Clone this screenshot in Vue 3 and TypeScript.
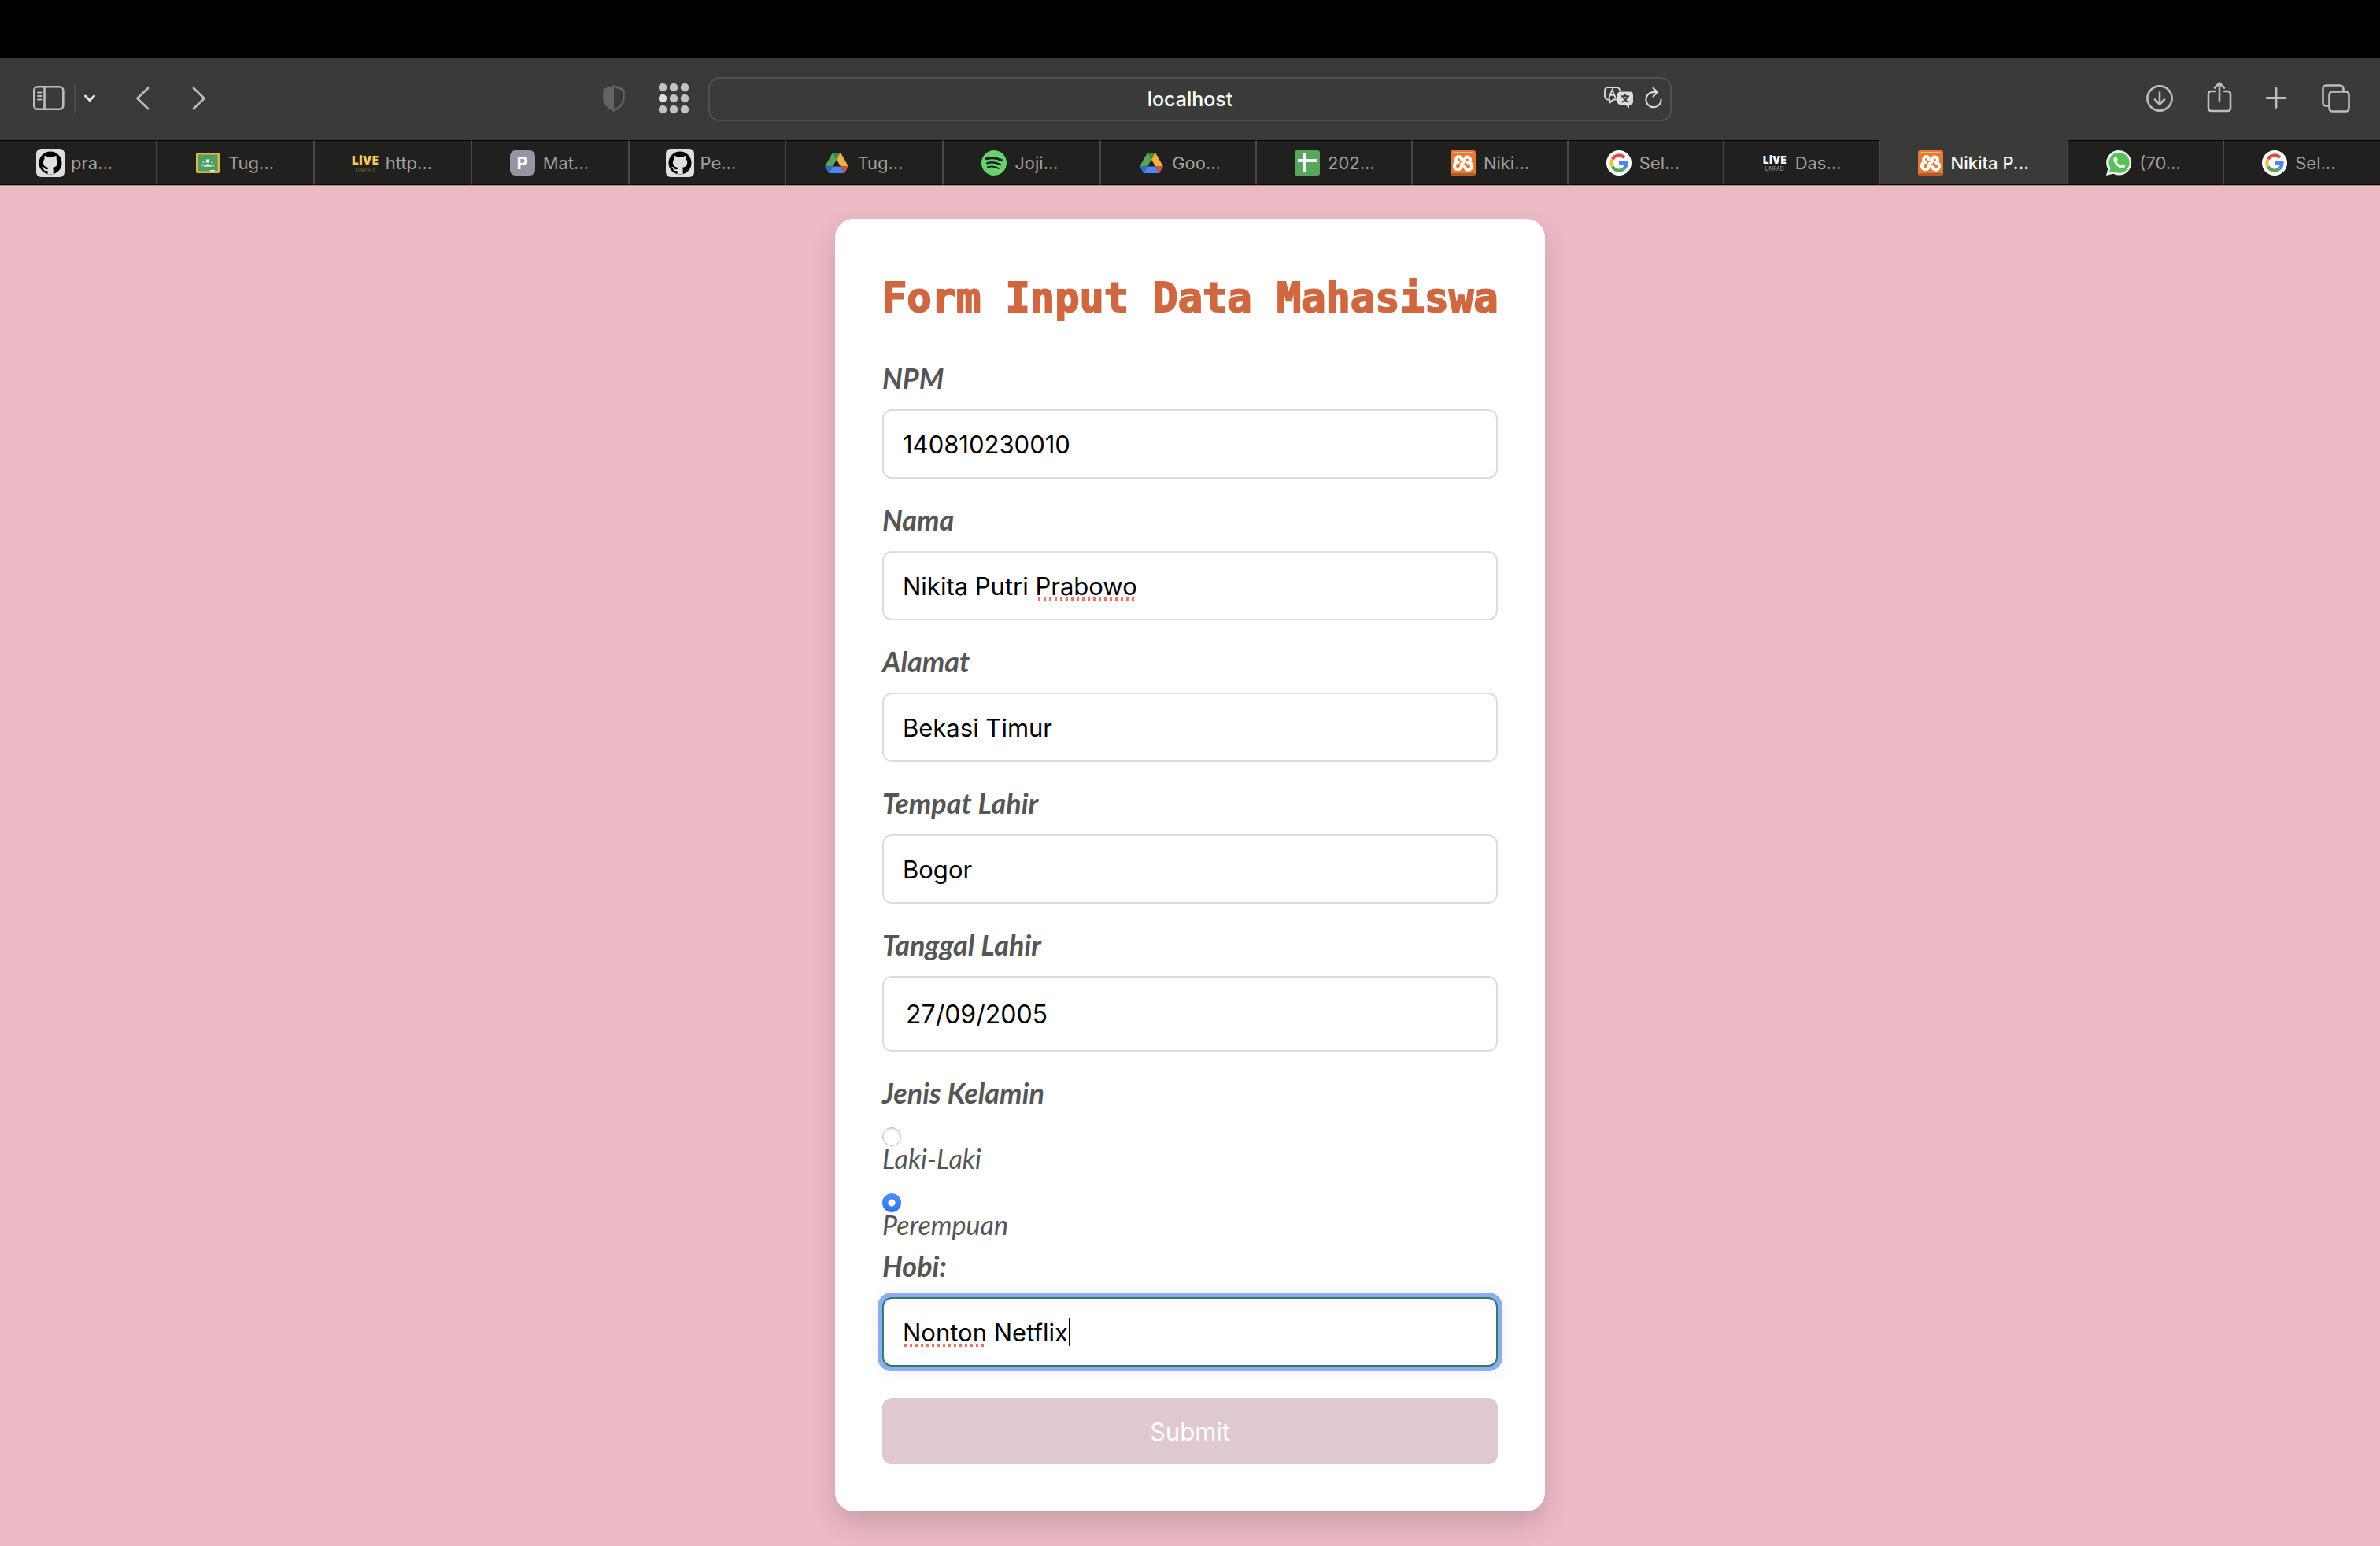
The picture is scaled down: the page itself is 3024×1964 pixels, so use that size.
<script setup lang="ts">
interface Tab { icon: string; title: string; kind?: string }
interface Field { id: string; label: string; value: string; mark?: { left: number; width: number }; kind?: string; caret?: number }

const tabs: Tab[] = [
  { icon: 'github', title: 'pra...', kind: 'wide' },
  { icon: 'classroom', title: 'Tug...', kind: 'wide' },
  { icon: 'live', title: 'http...', kind: 'wide' },
  { icon: 'p', title: 'Mat...', kind: 'wide' },
  { icon: 'github', title: 'Pe...', kind: 'wide' },
  { icon: 'drive', title: 'Tug...', kind: 'wide' },
  { icon: 'spotify', title: 'Joji...', kind: 'wide' },
  { icon: 'drive', title: 'Goo...' },
  { icon: 'sheets', title: '202...' },
  { icon: 'xampp', title: 'Niki...' },
  { icon: 'google', title: 'Sel...' },
  { icon: 'livewhite', title: 'Das...' },
  { icon: 'xampp', title: 'Nikita P...', kind: 'active' },
  { icon: 'whatsapp', title: '(70...' },
  { icon: 'google', title: 'Sel...' },
]

const fields: Field[] = [
  { id: 'npm', label: 'NPM', value: '140810230010' },
  { id: 'nama', label: 'Nama', value: 'Nikita Putri Prabowo', mark: { left: 196, width: 126 } },
  { id: 'alamat', label: 'Alamat', value: 'Bekasi Timur' },
  { id: 'tempat', label: 'Tempat Lahir', value: 'Bogor' },
  { id: 'tanggal', label: 'Tanggal Lahir', value: '27/09/2005', kind: 'date' },
]
const hobby: Field = { id: 'hobi', label: 'Hobi:', value: 'Nonton Netflix', mark: { left: 26, width: 107 }, caret: 237 }
const genders = [
  { id: 'laki', label: 'Laki-Laki', checked: false },
  { id: 'perempuan', label: 'Perempuan', checked: true },
]
</script>

<template>
  <div class="screen">
    <div class="notch"></div>
    <header class="toolbar">
      <div class="side">
        <button class="tool" aria-label="Sidebar">
          <svg width="40" height="32" viewBox="0 0 40 32" fill="none" stroke="#bdbdbb" stroke-width="2.600"><rect x="1.300" y="1.300" width="37" height="28.500" rx="4.500" /><path d="M14.500 2v27" /><path d="M6 8.500h4.500M6 13h4.500M6 17.500h4.500" stroke-width="1.800" stroke-linecap="round" /></svg>
        </button>
        <span class="rule"></span>
        <button class="tool" aria-label="Tab groups">
          <svg width="16" height="10" viewBox="0 0 16 10" fill="none" stroke="#e6e6e4" stroke-width="3" stroke-linecap="round" stroke-linejoin="round"><path d="M2.500 2L8 7.500 13.500 2" /></svg>
        </button>
        <button class="tool back" aria-label="Back">
          <svg width="18" height="30" viewBox="0 0 18 30" fill="none" stroke="#bdbdbb" stroke-width="2.800" stroke-linecap="round" stroke-linejoin="round"><path d="M16 2L2.500 15 16 28" /></svg>
        </button>
        <button class="tool" aria-label="Forward">
          <svg width="18" height="30" viewBox="0 0 18 30" fill="none" stroke="#bdbdbb" stroke-width="2.800" stroke-linecap="round" stroke-linejoin="round"><path d="M2 2l13.500 13L2 28" /></svg>
        </button>
        <span class="spring"></span>
        <button class="tool shield" aria-label="Privacy report">
          <svg width="28" height="34" viewBox="0 0 28 34"><path d="M14 1.500L25 5.500Q26.500 6 26.500 8v9.500c0 7-5.500 11.500-12.500 15-7-3.500-12.500-8-12.500-15V8Q1.500 6 3 5.500z" fill="none" stroke="#636361" stroke-width="2.500" /><path d="M14 1.500L3 5.500Q1.500 6 1.500 8v9.500c0 7 5.500 11.500 12.500 15z" fill="#636361" /></svg>
        </button>
        <button class="tool" aria-label="Start page">
          <svg width="40" height="40" viewBox="0 0 40 40" fill="#c2c2c0"><circle cx="6" cy="6" r="5.200" /><circle cx="20" cy="6" r="5.200" /><circle cx="34" cy="6" r="5.200" /><circle cx="6" cy="20" r="5.200" fill="#e0e0de" /><circle cx="20" cy="20" r="5.200" /><circle cx="34" cy="20" r="5.200" /><circle cx="6" cy="34" r="5.200" /><circle cx="20" cy="34" r="5.200" /><circle cx="34" cy="34" r="5.200" /></svg>
        </button>
      </div>
      <div class="address">
        <input class="url" type="text" value="localhost" aria-label="Address" />
        <div class="inside">
          <button class="tool" aria-label="Translate">
            <svg width="38" height="28" viewBox="0 0 38 28" fill="none"><path d="M16 16.500h-4L7.500 20.500v-4H5A4 4 0 0 1 1 12.500V5a4 4 0 0 1 4-4h11a4 4 0 0 1 4 4v1" stroke="#dcdcda" stroke-width="1.800" stroke-linejoin="round" /><path d="M6.500 14L10.500 4l4 10M8 10.800h5" stroke="#dcdcda" stroke-width="1.900" /><path d="M21 6.500h12a4 4 0 0 1 4 4V19a4 4 0 0 1-4 4h-1v4.500L27 23h-6a4 4 0 0 1-4-4v-8.500a4 4 0 0 1 4-4z" fill="#dcdcda" /><path d="M22 12.200h10M27 9.500v2.700M22.500 19.800c4-1.500 6.500-4 7.500-7.600M24 12.200c1 3.600 3.500 6.100 7.500 7.600" stroke="#3a3a38" stroke-width="1.900" /></svg>
          </button>
          <button class="tool" aria-label="Reload">
            <svg width="22" height="28" viewBox="0 0 22 28" fill="none" stroke="#dcdcda" stroke-width="2" stroke-linecap="round" stroke-linejoin="round"><path d="M15.500 7H11A9.600 9.600 0 1 0 20.600 16.500M10.500 2l5.300 5-5.300 5.500" /></svg>
          </button>
        </div>
      </div>
      <div class="side right">
        <button class="tool" aria-label="Downloads">
          <svg width="36" height="36" viewBox="0 0 36 36" fill="none" stroke="#bdbdbb" stroke-width="2.600" stroke-linecap="round" stroke-linejoin="round"><circle cx="18" cy="18" r="15.600" /><path d="M18 10.500v14.500M12 19.500l6 6 6-6" /></svg>
        </button>
        <button class="tool share" aria-label="Share">
          <svg width="32" height="40" viewBox="0 0 32 40" fill="none" stroke="#bdbdbb" stroke-width="2.600" stroke-linecap="round" stroke-linejoin="round"><path d="M10 13H5.500a3.500 3.500 0 0 0-3.500 3.500v18a3.500 3.500 0 0 0 3.500 3.500h21a3.500 3.500 0 0 0 3.500-3.500v-18a3.500 3.500 0 0 0-3.500-3.500H22M16 25V2.500M10 8.500l6-6 6 6" /></svg>
        </button>
        <button class="tool" aria-label="New tab">
          <svg width="30" height="30" viewBox="0 0 30 30" stroke="#bdbdbb" stroke-width="2.800" stroke-linecap="round"><path d="M14 2.500v24M2 14.500h24" /></svg>
        </button>
        <button class="tool" aria-label="Tab overview">
          <svg width="36" height="36" viewBox="0 0 36 36" fill="none" stroke="#bdbdbb" stroke-width="2.600"><rect x="9.500" y="9.500" width="25" height="25" rx="4" /><path d="M9 27.500H5.500a4 4 0 0 1-4-4v-18a4 4 0 0 1 4-4h18a4 4 0 0 1 4 4V9" /></svg>
        </button>
      </div>
    </header>

    <nav class="tabs">
      <a v-for="(tab, i) in tabs" :key="i" href="#" class="tab" :class="tab.kind">
        <span class="favicon">
          <svg v-if="tab.icon === 'github'" width="36" height="36" viewBox="0 0 36 36"><rect width="36" height="36" rx="6" fill="#dedede" /><circle cx="18" cy="18" r="14.500" fill="#000" /><path d="M14.500 32.300v-4.300c-4 .9-5-1.500-5.500-2.800-.5-1-1.300-1.500-1.700-2 2-.6 3 .8 3.800 2 1 1.500 2.300 1.300 3.500.8.200-1 .6-1.600 1.100-2-4-.5-6.700-2.200-6.700-7 0-1.600.5-3 1.600-4.100-.3-1-.3-2.400.2-3.900 1.600 0 3 .8 4.200 1.600 2-.5 4.200-.5 6.200 0 1.200-.8 2.600-1.600 4.200-1.600.5 1.500.5 2.900.2 3.900 1 1.100 1.600 2.500 1.600 4.100 0 4.800-2.700 6.500-6.700 7 .7.600 1.200 1.600 1.200 3.200v5.100z" fill="#dedede" /></svg>
          <svg v-else-if="tab.icon === 'classroom'" width="30" height="26" viewBox="0 0 30 26"><rect width="30" height="26" rx="2" fill="#e8b53c" /><rect x="2.500" y="2.500" width="25" height="21" fill="#4ba064" /><circle cx="15" cy="10.500" r="2.300" fill="#fff" /><path d="M10 17.500c.5-4 9.500-4 10 0z" fill="#fff" /><g fill="#8fc7a0"><circle cx="9.500" cy="12" r="1.500" /><circle cx="20.500" cy="12" r="1.500" /><path d="M6 17.500c.3-3 3-3.300 4.500-2.500l-1.500 2.500zM24 17.500c-.3-3-3-3.300-4.500-2.500l1.500 2.500z" /></g><path d="M18 22h6v1.500h-6z" fill="#fff" /></svg>
          <span v-else-if="tab.icon === 'live'" class="live"><b>LiVE</b><i>UNPAD</i></span>
          <span v-else-if="tab.icon === 'livewhite'" class="live pale"><b>LiVE</b><i>UNPAD</i></span>
          <span v-else-if="tab.icon === 'p'" class="letter">P</span>
          <svg v-else-if="tab.icon === 'drive'" width="30" height="26" viewBox="0 0 30 26"><path d="M10 0h10l-5 8.700z" fill="#3b8a4b" /><path d="M10 0L0 17.500h10L15 8.700z" fill="#58a55c" /><path d="M20 0h-.5L15 8.700l5.200 8.800H30z" fill="#f0b03f" /><path d="M0 17.500h10L5 26z" fill="#3569d6" /><path d="M10 17.500h10.200L25 26H5z" fill="#4f86ec" /><path d="M20.200 17.500H30L25 26z" fill="#d95040" /></svg>
          <svg v-else-if="tab.icon === 'spotify'" width="32" height="32" viewBox="0 0 32 32" fill="none" stroke="#20201e" stroke-linecap="round"><circle cx="16" cy="16" r="16" fill="#65d46e" stroke="none" /><path d="M6.500 10.800c6.500-1.900 13.500-1.300 19.300 2" stroke-width="3" /><path d="M7.300 16.200c5.500-1.600 11.500-1 16.500 2" stroke-width="2.600" /><path d="M8 21.200c4.800-1.300 9.500-.8 13.700 1.700" stroke-width="2.200" /></svg>
          <svg v-else-if="tab.icon === 'sheets'" width="32" height="32" viewBox="0 0 32 32"><rect width="32" height="32" rx="3" fill="#58a55c" /><path d="M11 4h4v7h13v4H15v13h-4V15H4v-4h7z" fill="#fff" /></svg>
          <svg v-else-if="tab.icon === 'xampp'" width="32" height="32" viewBox="0 0 32 32"><rect width="32" height="32" rx="3" fill="#e57a35" /><path d="M3 2h26l-2 2H5z" fill="#f2b48a" /><path d="M1 29h30v1.500a1.500 1.500 0 0 1-1.500 1.500h-27A1.500 1.500 0 0 1 1 30.500z" fill="#b45c24" /><g fill="none" stroke="#fff" stroke-width="4" stroke-linecap="round" stroke-linejoin="round"><path d="M14 11.500a3.500 3.500 0 1 0-4 3.500 4.600 4.600 0 1 0 4 5v-2c0-2 4-2 4-4.500v-2a3.500 3.500 0 1 1 4 4 4.600 4.600 0 1 1-4 5" /></g></svg>
          <svg v-else-if="tab.icon === 'google'" width="32" height="32" viewBox="0 0 32 32" fill="none" stroke-width="4.200"><circle cx="16" cy="16" r="16" fill="#fff" /><path d="M22.800 9.200A9.600 9.600 0 0 0 7.700 11.200" stroke="#d95040" /><path d="M7.700 11.200a9.600 9.600 0 0 0 0 9.600" stroke="#f2bd42" /><path d="M7.700 20.800a9.600 9.600 0 0 0 14.500 2.600" stroke="#58a55c" /><path d="M22.200 23.400A9.600 9.600 0 0 0 25.500 16H16" stroke="#5383ec" /></svg>
          <svg v-else width="34" height="32" viewBox="0 0 34 32"><path d="M17.500 0A15.800 15.800 0 1 1 10 29.800L1 32l2.300-8.500A15.800 15.800 0 0 1 17.500 0z" fill="#f2f2f2" /><path d="M17.500 2.800A13 13 0 1 1 10.800 26.900L4.800 28.500l1.600-5.800A13 13 0 0 1 17.500 2.800z" fill="#55c157" /><path d="M12.500 8.500c.9-.5 1.800-.3 2.200.7l1 2.600c.2.700-1.300 1.700-1.200 2.200 1 2.300 2.800 4 5.300 5 .7.100 1.500-1.700 2.200-1.500l3 1.500c.7.400-.2 2.700-1.400 3.300-4.800 2.200-13.500-5-13.300-10.700 0-1.300 1.300-2.600 2.200-3.100z" fill="#fff" /></svg>
        </span>
        <span>{{ tab.title }}</span>
      </a>
    </nav>

    <main class="page">
      <form class="card" @submit.prevent>
        <h1>Form Input Data Mahasiswa</h1>
        <div v-for="f in fields" :key="f.id" class="group">
          <label class="name" :for="f.id">{{ f.label }}</label>
          <div class="box">
            <input :id="f.id" class="field" :class="f.kind" type="text" :value="f.value" />
            <span v-if="f.mark" class="mark" :style="{ left: f.mark.left + 'px', width: f.mark.width + 'px' }"></span>
          </div>
        </div>
        <fieldset>
          <legend class="name">Jenis Kelamin</legend>
          <div v-for="g in genders" :key="g.id" class="option">
            <input :id="g.id" type="radio" name="gender" :checked="g.checked" />
            <label :for="g.id">{{ g.label }}</label>
          </div>
        </fieldset>
        <div class="group">
          <label class="name" :for="hobby.id">{{ hobby.label }}</label>
          <div class="box">
            <input :id="hobby.id" class="field focused" type="text" :value="hobby.value" />
            <span class="mark" :style="{ left: hobby.mark!.left + 'px', width: hobby.mark!.width + 'px' }"></span>
            <span class="caret" :style="{ left: hobby.caret + 'px' }"></span>
          </div>
        </div>
        <button class="submit" type="submit">Submit</button>
      </form>
    </main>
  </div>
</template>

<style>
body {
  margin: 0;
  background: #ecbac5;
}
</style>

<style scoped>
* {
  box-sizing: border-box;
}
.screen {
  display: flex;
  flex-direction: column;
  min-height: 100vh;
  font-family: Inter, "Liberation Sans", sans-serif;
}
.notch {
  height: 74px;
  background: #000;
}
.toolbar {
  display: grid;
  grid-template-columns: minmax(0, 1fr) minmax(0, 1224px) minmax(0, 1fr);
  align-items: center;
  height: 104px;
  background: #3a3a38;
}
.side {
  display: flex;
  align-items: center;
  padding: 0 24px 2px 42px;
}
.tool {
  display: flex;
  padding: 0;
  border: 0;
  background: none;
}
.rule {
  width: 2px;
  height: 36px;
  margin: 0 10px 0 12px;
  background: #4b4b49;
}
.back {
  margin: 0 54px 0 50px;
}
.spring {
  flex: 1;
}
.shield {
  margin-right: 42px;
}
.right {
  justify-content: flex-end;
  gap: 42px;
  padding: 0 38px 2px 0;
}
.share {
  margin-bottom: 4px;
}
.address {
  position: relative;
}
.url {
  display: block;
  width: 100%;
  height: 56px;
  border: 2px solid #51514f;
  border-radius: 14px;
  background: #3a3a38;
  color: #fff;
  font: 500 25px Inter, "Liberation Sans", sans-serif;
  text-align: center;
}
.inside {
  position: absolute;
  top: 12px;
  right: 12px;
  display: flex;
  gap: 14px;
}
.tabs {
  display: flex;
  height: 58px;
  border-bottom: 1px solid #a98c93;
  background: #20201e;
}
.tab {
  display: flex;
  flex: 1 1 198px;
  align-items: center;
  gap: 8px;
  min-width: 0;
  padding-left: 46px;
  border-top: 1px solid #000;
  border-right: 2px solid #484846;
  border-bottom: 1px solid #000;
  color: #a0a09e;
  font-size: 22px;
  text-decoration: none;
  white-space: nowrap;
}
.tab:last-child {
  border-right: 0;
}
.wide {
  flex-basis: 200px;
}
.active {
  flex-basis: 240px;
  border-top-color: #3a3a38;
  background: #3a3a38;
  color: #fff;
  font-weight: 500;
}
.favicon {
  display: flex;
  flex: none;
  align-items: center;
  justify-content: center;
  width: 36px;
}
.letter {
  width: 32px;
  height: 32px;
  border-radius: 7px;
  background: #9594a2;
  color: #fff;
  font-size: 22px;
  font-weight: 700;
  line-height: 32px;
  text-align: center;
}
.live {
  display: flex;
  flex-direction: column;
  align-items: center;
  color: #f4c955;
}
.live b {
  font: 800 16px/20px "Open Sans", sans-serif;
}
.live i {
  color: #7a6a3a;
  font: 400 7px/8px Inter, sans-serif;
}
.pale {
  color: #fff;
}
.pale b {
  font-size: 14px;
  line-height: 16px;
}
.pale i {
  color: #9a9a98;
}
.page {
  display: flex;
  flex: 1;
  align-items: flex-start;
  justify-content: center;
  padding: 42px 20px 44px;
  background: #ecbac5;
}
.card {
  width: 902px;
  padding: 60px;
  border-radius: 24px;
  background: #fff;
  box-shadow: 0 16px 32px rgba(0, 0, 0, 0.15);
}
h1 {
  margin: 0 0 50px;
  color: #cf6740;
  font: 700 52px/80px "DejaVu Sans Mono", monospace;
  text-align: center;
  white-space: nowrap;
  -webkit-text-stroke: 2px #cf6740;
}
.group {
  margin-bottom: 40px;
}
.name,
.option label {
  display: block;
  color: #555;
  font: italic 400 34px/24px Lato, sans-serif;
}
.name {
  margin-bottom: 28px;
  padding: 0;
  font-size: 36px;
  font-weight: 700;
}
.box {
  position: relative;
}
.field {
  display: block;
  width: 100%;
  height: 88px;
  padding: 0 24px;
  border: 2px solid #ddd;
  border-radius: 12px;
  outline: none;
  background: #fff;
  color: #000;
  font: 400 31px Inter, "Liberation Sans", sans-serif;
}
.date {
  height: 96px;
  padding: 0 28px;
  font-size: 32px;
}
.focused {
  border-color: #2f7a68;
  box-shadow: 0 0 0 6px #8cabf0, 0 0 20px 6px rgba(47, 122, 104, 0.1);
}
.mark {
  position: absolute;
  top: 59px;
  height: 4px;
  background: radial-gradient(circle, #f4706c 2px, transparent 2px) 0 0 / 7px 4px repeat-x;
}
.caret {
  position: absolute;
  top: 26px;
  width: 2px;
  height: 36px;
  background: #000;
}
fieldset {
  min-width: 0;
  margin: 0 0 28px;
  padding: 0;
  border: 0;
}
.option + .option {
  margin-top: 32px;
}
.option input {
  display: block;
  appearance: none;
  width: 24px;
  height: 24px;
  margin: 0 0 4px;
  border: 1px solid #bbb;
  border-radius: 50%;
  background: #fff;
  box-shadow: inset 0 2px 3px rgba(0, 0, 0, 0.12);
}
.option input:checked {
  border: 0;
  background: radial-gradient(circle, #fff 4px, transparent 5px), linear-gradient(#4b93f8, #2f72f6);
  box-shadow: none;
}
fieldset .name {
  margin-bottom: 32px;
}
.submit {
  display: block;
  width: 100%;
  height: 84px;
  padding: 0;
  border: 0;
  border-radius: 12px;
  background: #dfc9ce;
  color: #fff;
  font: 400 31px Inter, "Liberation Sans", sans-serif;
}
</style>
